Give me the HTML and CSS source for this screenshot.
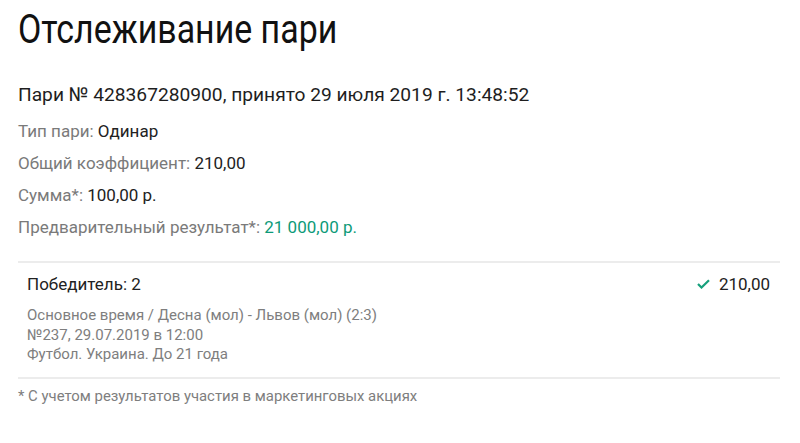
FILE: index.html
```html
<!DOCTYPE html>
<html lang="ru">
<head>
<meta charset="utf-8">
<link rel="stylesheet" href="styles.css">
</head>
<body>
<div class="page">
  <h1 class="title">Отслеживание пари</h1>
  <div class="bet-head">Пари № 428367280900, принято 29 июля 2019 г. 13:48:52</div>
  <div class="info">
    <div class="row"><span class="label">Тип пари:</span> <span class="value">Одинар</span></div>
    <div class="row"><span class="label">Общий коэффициент:</span> <span class="value">210,00</span></div>
    <div class="row"><span class="label">Сумма*:</span> <span class="value">100,00 р.</span></div>
    <div class="row"><span class="label">Предварительный результат*:</span> <span class="value green">21 000,00 р.</span></div>
  </div>
  <div class="event">
    <div class="event-top">
      <span class="outcome">Победитель: 2</span>
      <span class="coef"><svg class="check" width="13" height="10" viewBox="0 0 13 10"><path d="M1 5 L4.5 8.5 L12 1.2" fill="none" stroke="#16a07c" stroke-width="2.2"/></svg>210,00</span>
    </div>
    <div class="event-details">
      <div>Основное время / Десна (мол) - Львов (мол) (2:3)</div>
      <div>№237, 29.07.2019 в 12:00</div>
      <div>Футбол. Украина. До 21 года</div>
    </div>
  </div>
  <div class="note">* С учетом результатов участия в маркетинговых акциях</div>
</div>
</body>
</html>
```
FILE: styles.css
```css
html, body {
  margin: 0;
  padding: 0;
  background: #fff;
}
body {
  font-family: Roboto, "Noto Sans", sans-serif;
  color: #222;
}
.page {
  padding: 8px 20px 0 18px;
}
.title {
  margin: 0;
  font-size: 40px;
  font-weight: 400;
  line-height: 44px;
  color: #111;
  transform: scaleX(0.848);
  transform-origin: left center;
  white-space: nowrap;
}
.bet-head {
  margin-top: 31px;
  font-size: 19.2px;
  line-height: 24px;
  color: #1e1e1e;
}
.info {
  margin-top: 12px;
  display: flex;
  flex-direction: column;
  gap: 8px;
}
.row {
  font-size: 17px;
  line-height: 24px;
}
.label {
  color: #7a7a7a;
}
.value {
  color: #222;
}
.green {
  color: #0d9a78;
}
.event {
  margin-top: 22px;
  border-top: 2px solid #ececec;
  border-bottom: 2px solid #ececec;
  padding: 10px 10px 12px 9px;
}
.event-top {
  display: flex;
  justify-content: space-between;
  align-items: center;
  font-size: 17px;
  line-height: 22px;
  color: #222;
}
.coef {
  display: flex;
  align-items: center;
  gap: 9px;
}
.event-details {
  margin-top: 11px;
  font-size: 15px;
  line-height: 19.5px;
  color: #7e7e7e;
}
.note {
  margin-top: 8px;
  font-size: 14.9px;
  line-height: 18px;
  color: #7e7e7e;
}
```
